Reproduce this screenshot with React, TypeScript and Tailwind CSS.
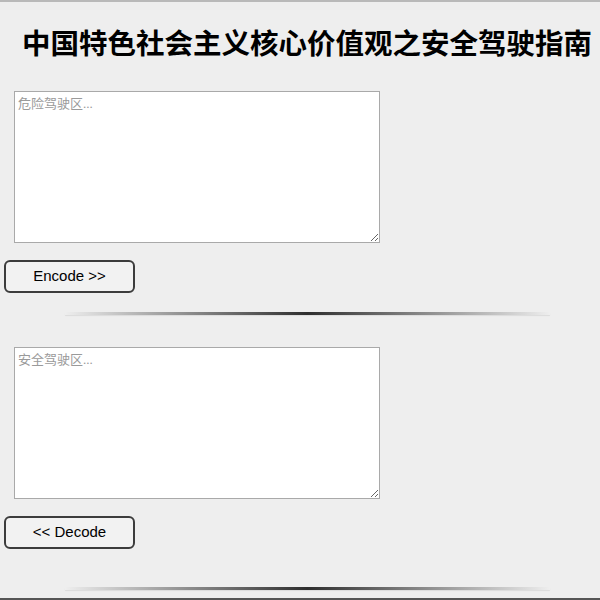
import { useState } from 'react'

const SANS = 'font-["Liberation_Sans","Noto_Sans_CJK_SC",sans-serif]'
const AREA =
  'block ml-[14px] w-[366px] h-[152px] bg-white border border-[#a9a9a9] p-[3px] text-[13px] leading-[17px] placeholder:text-[#9a9a9a] outline-none font-["Liberation_Serif","Noto_Sans_CJK_SC",serif]'
const BTN =
  'block mt-[17px] ml-[4px] w-[131px] h-[33px] rounded-[6px] border-2 border-[#3c3c3c] bg-[#f2f2f2] text-[15px] text-black'
const RULE =
  'ml-[65px] w-[485px] h-[3px] bg-linear-to-r from-transparent via-[#2e2e2e] to-transparent shadow-[0_1px_1px_rgba(0,0,0,0.08)]'

export default function App() {
  const [danger, setDanger] = useState('')
  const [safe, setSafe] = useState('')

  return (
    <div className={`h-[600px] bg-[#eeeeee] border-t-2 border-b-2 border-t-[#b9b9b9] border-b-[#555] overflow-hidden ${SANS}`}>
      <h1 className='mt-[23px] pl-[22px] text-[28.5px] leading-[34px] font-bold text-black whitespace-nowrap font-["Noto_Sans_CJK_SC",sans-serif]'>
        中国特色社会主义核心价值观之安全驾驶指南
      </h1>

      {/* encode */}
      <textarea
        value={danger}
        onChange={e => setDanger(e.target.value)}
        placeholder="危险驾驶区..."
        className={`${AREA} mt-[32px]`}
      />
      <button className={BTN}>Encode &gt;&gt;</button>
      <div className={`${RULE} mt-[19px]`} />

      {/* decode */}
      <textarea
        value={safe}
        onChange={e => setSafe(e.target.value)}
        placeholder="安全驾驶区..."
        className={`${AREA} mt-[32px]`}
      />
      <button className={BTN}>&lt;&lt; Decode</button>
      <div className={`${RULE} mt-[38px]`} />
    </div>
  )
}
